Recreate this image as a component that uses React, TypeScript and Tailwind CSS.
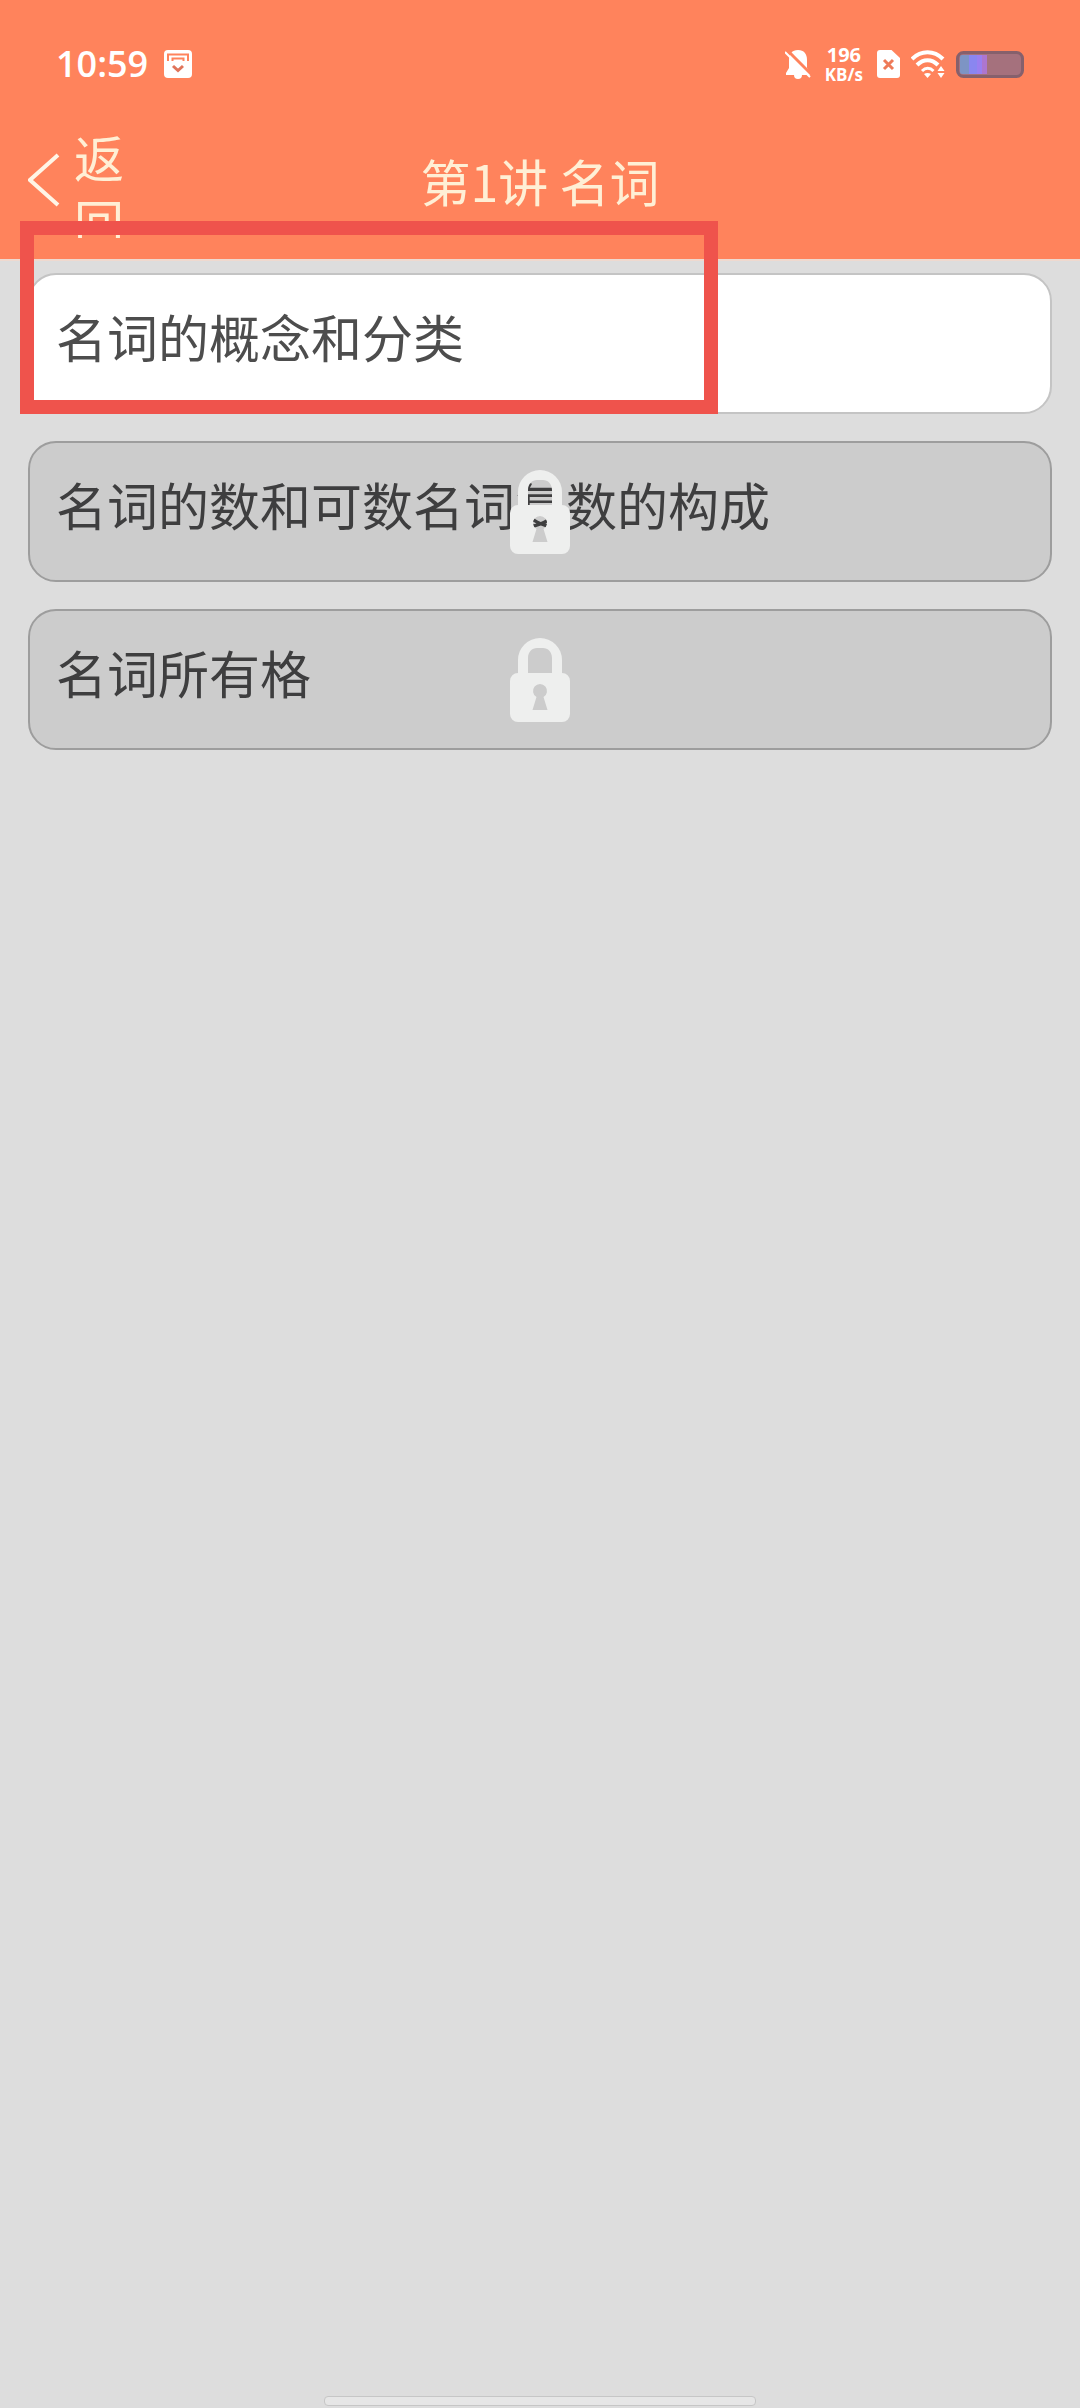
const lessons = [
	{ title: "名词的概念和分类", locked: false, marked: true },
	{ title: "名词的数和可数名词复数的构成", locked: true, marked: false },
	{ title: "名词所有格", locked: true, marked: false },
];

const AppIcon = () => (
	<svg width="28" height="28" viewBox="0 0 28 28" fill="none">
		<rect width="28" height="28" rx="4" fill="#fff" />
		<path d="M4 11V4.500h20V11" stroke="#ff835c" strokeWidth="2" />
		<path d="M8.500 11V8.500h11V11" stroke="#ff835c" strokeWidth="2" />
		<path d="m9 16 5 4.500 5-4.500" stroke="#e0745a" strokeWidth="3" />
	</svg>
);

const MutedBell = () => (
	<svg width="26" height="29" viewBox="0 0 26 29">
		<path
			d="M13 0c6 0 9 4 9 10v8l3 5v2h-8a4 4 0 0 1-8 0H1v-2l3-5v-8c0-6 3-10 9-10z"
			fill="#fff"
		/>
		<path d="M2 0l25 25" stroke="#ff835c" strokeWidth="3" />
		<path d="M0 2l25 25" stroke="#fff" strokeWidth="2" />
	</svg>
);

const SimIcon = () => (
	<svg width="23" height="28" viewBox="0 0 23 28">
		<path
			d="M3 0h11.500L23 8v17a3 3 0 0 1-3 3H3a3 3 0 0 1-3-3V3a3 3 0 0 1 3-3z"
			fill="#fff"
		/>
		<path d="m7 10 9 9m0-9-9 9" stroke="#ee7a58" strokeWidth="3" />
	</svg>
);

const WifiIcon = () => (
	<svg width="34" height="28" viewBox="0 0 34 28" fill="none">
		<path d="M1 9C10 0 23 0 32 9" stroke="#fff" strokeWidth="4" />
		<path d="M6 15c6.500-6.500 14.500-6.500 21 0" stroke="#fff" strokeWidth="4" />
		<path d="M11 21c3.500-3.600 8-3.600 11.500 0" stroke="#fff" strokeWidth="3" />
		<path d="M16.500 28l-3.500-4c2-1.500 5-1.500 7 0z" fill="#fff" />
		<path d="M30 14l-5 7v7h9v-12z" fill="#ff835c" />
		<path d="M30 16l3.500 5h-7zM30 28l3.500-5h-7z" fill="#fff" />
	</svg>
);

const Battery = () => (
	<svg width="68" height="27" viewBox="0 0 68 27">
		<rect x="1.500" y="1.500" width="65" height="24" rx="6" fill="#a5717d" stroke="#86606c" strokeWidth="3" />
		<path d="M4 6a2 2 0 0 1 2-2h7v19H6a2 2 0 0 1-2-2z" fill="#7d94c4" />
		<path d="M13 4h8v19h-8z" fill="#8a86f0" />
		<path d="M21 4h5v19h-5z" fill="#9a7ff0" />
		<path d="M26 4h5v19h-5z" fill="#ad76cf" />
	</svg>
);

const LockIcon = () => (
	<svg width="60" height="84" viewBox="0 0 60 84">
		<path
			fillRule="evenodd"
			fill="#eeefee"
			d="M8 35V22a22 22 0 0 1 44 0v13a8 8 0 0 1 8 8v33a8 8 0 0 1-8 8H8a8 8 0 0 1-8-8V43a8 8 0 0 1 8-8zM18 35h24V20c0-6-4-10-9-10h-6c-5 0-9 4-9 10zM26.500 59 22.500 72h15l-4-13a7 7 0 1 0-7 0z"
		/>
	</svg>
);

const App = () => {
	return (
		<div className="flex min-h-screen flex-col bg-[#dddddd] font-['Noto_Sans_CJK_SC',sans-serif]">
			<header className="border-b-2 border-[#efd9cf] bg-[#ff835c] pb-[21px]">
				<div className="flex h-[122px] items-center justify-between pt-[6px] pr-14 pl-14 font-['Open_Sans',sans-serif] text-white">
					<div className="flex items-center gap-4">
						<span className="text-[36px] leading-[40px] font-semibold">10:59</span>
						<AppIcon />
					</div>
					<div className="flex items-center gap-[11px]">
						<MutedBell />
						<div className="flex flex-col items-center px-[3px] pt-[2px] font-bold">
							<span className="text-[20px] leading-[20px]">196</span>
							<span className="text-[17px] leading-[20px]">KB/s</span>
						</div>
						<SimIcon />
						<WifiIcon />
						<Battery />
					</div>
				</div>

				<nav className="grid h-[116px] grid-cols-[1fr_auto_1fr] items-center text-[50px] leading-[60px] text-[#ffefd5]">
					<button
						type="button"
						className="flex h-[116px] items-center gap-[14px] overflow-hidden pl-7 text-left leading-[64px]">
						<svg width="32" height="54" viewBox="0 0 32 54" fill="none">
							<path d="M30 2 2 27l28 25" stroke="#fff5e6" strokeWidth="4" />
						</svg>
						<span className="w-[51px] self-start pt-[2px]">返回</span>
					</button>
					<h1>第1讲 名词</h1>
				</nav>
			</header>

			<main className="flex-1 px-7 pt-3">
				<ul className="flex flex-col gap-[27px]">
					{lessons.map((lesson) => (
						<li key={lesson.title} className="relative">
							<button
								type="button"
								disabled={lesson.locked}
								className={`block w-full rounded-[28px] border-2 pt-[29px] pb-[44px] pl-[26px] text-left text-[51px] leading-[64px] ${
									lesson.locked
										? "border-[#9d9d9d] bg-[#cccccc] text-[#3e3e3f]"
										: "border-[#c4c4c4] bg-white text-[#4d4d4d]"
								}`}>
								{lesson.title}
							</button>
							{lesson.locked && (
								<span className="absolute inset-0 flex items-center justify-center">
									<LockIcon />
								</span>
							)}
							{lesson.marked && (
								<span className="pointer-events-none absolute -top-[52px] bottom-0 -left-2 w-[698px] border-[14px] border-[#ef534c]" />
							)}
						</li>
					))}
				</ul>
			</main>

			<footer className="flex justify-center pb-[2px]">
				<div className="h-[10px] w-2/5 rounded-[4px] border border-[#c6c6c6] bg-[#e6e6e6]" />
			</footer>
		</div>
	);
};

export default App;
